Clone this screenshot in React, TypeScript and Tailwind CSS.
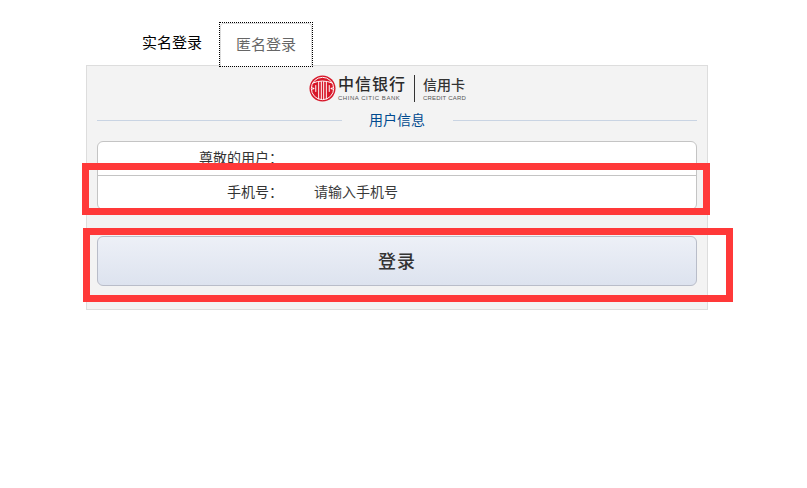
const cjk = "font-['Liberation_Sans','Noto_Sans_CJK_SC',sans-serif]"

function CiticLogo() {
  return (
    <svg viewBox="0 0 28 28" className="h-[27px] w-[27px] shrink-0">
      <circle cx="14" cy="14" r="13.5" fill="#d7182a" />
      <circle cx="14" cy="14" r="11.6" fill="none" stroke="#fff" strokeWidth="1" />
      <path d="M3.5 8.5Q14 4 24.5 8.5M10 7v18M12.8 6.5v19M15.2 6.5v19M18 7v18" fill="none" stroke="#fff" strokeWidth="1" />
      <path d="M7 10.5v7M21 10.5v7" stroke="#fff" strokeWidth="1" />
      <path d="M3.5 12.5 6 14l-2.5 1.5zM24.5 12.5 22 14l2.5 1.5z" fill="#fff" />
    </svg>
  )
}

export default function App() {
  return (
    <div className={`relative h-[488px] w-[807px] overflow-hidden bg-white pt-[22px] ${cjk}`}>
      {/* Tabs */}
      <div className="flex h-[43px] pl-[142px]">
        <div className="flex h-[43px] w-[60px] items-center justify-center text-[15px] text-black">实名登录</div>
        <div className="relative z-10 ml-[17px] h-[45px] w-[94px] border border-dotted border-black">
          <div className="flex h-full items-center justify-center rounded-t-[4px] border border-b-0 border-[#ddd] bg-white text-[15px] text-[#666]">
            匿名登录
          </div>
        </div>
      </div>

      <div className="ml-[86px] h-[245px] w-[622px] border border-[#ddd] bg-[#f3f3f3] px-[10px]">
        {/* Logo */}
        <div className="flex h-[44px] items-center justify-center pr-[19px] pt-[1px]">
          <CiticLogo />
          <div className="ml-[2px] flex flex-col text-[#2b2b2b]">
            <span className="text-[16px] font-medium leading-[18px] tracking-[1px]">中信银行</span>
            <span className="whitespace-nowrap text-[6px] leading-[8px] tracking-[0.55px] text-[#555]">CHINA CITIC BANK</span>
          </div>
          <div className="mx-[8px] h-[27px] w-px bg-[#333]" />
          <div className="flex flex-col text-[#333]">
            <span className="text-[14px] font-medium leading-[18px]">信用卡</span>
            <span className="whitespace-nowrap text-[6px] leading-[8px] tracking-[0.2px] text-[#555]">CREDIT CARD</span>
          </div>
        </div>

        {/* Section heading */}
        <div className="flex h-[20px] items-center">
          <div className="h-px flex-1 bg-[#c9d4e3]" />
          <div className="w-[111px] text-center text-[14px] text-[#004a8f]">用户信息</div>
          <div className="h-px flex-1 bg-[#c9d4e3]" />
        </div>

        {/* Form card */}
        <div className="mt-[11px] h-[69px] rounded-[6px] border border-[#c4c4c4] bg-white">
          <div className="flex h-[34px] items-center border-b border-[#c4c4c4] text-[14px] text-[#333]">
            <div className="w-[185px] text-right">尊敬的用户：</div>
          </div>
          <div className="flex h-[33px] items-center text-[14px] text-[#333]">
            <div className="w-[185px] text-right">手机号：</div>
            <div className="ml-[31px] text-[14px] text-[#3a3a3a]">请输入手机号</div>
          </div>
        </div>

        {/* Submit */}
        <button className="mt-[26px] flex h-[50px] w-full items-center justify-center rounded-[6px] border border-[#b9bdc9] bg-gradient-to-b from-[#edf0f7] to-[#dde3ef] pt-[2px] text-[18px] font-medium tracking-[1px] text-[#333]">
          登录
        </button>
      </div>

      {/* Red annotation boxes drawn over the page */}
      <div className="absolute left-[82px] top-[163px] h-[52px] w-[628px] border-[7px] border-[#ff3939]" />
      <div className="absolute left-[83px] top-[228px] h-[74px] w-[650px] border-[7px] border-[#ff3939]" />
    </div>
  )
}
